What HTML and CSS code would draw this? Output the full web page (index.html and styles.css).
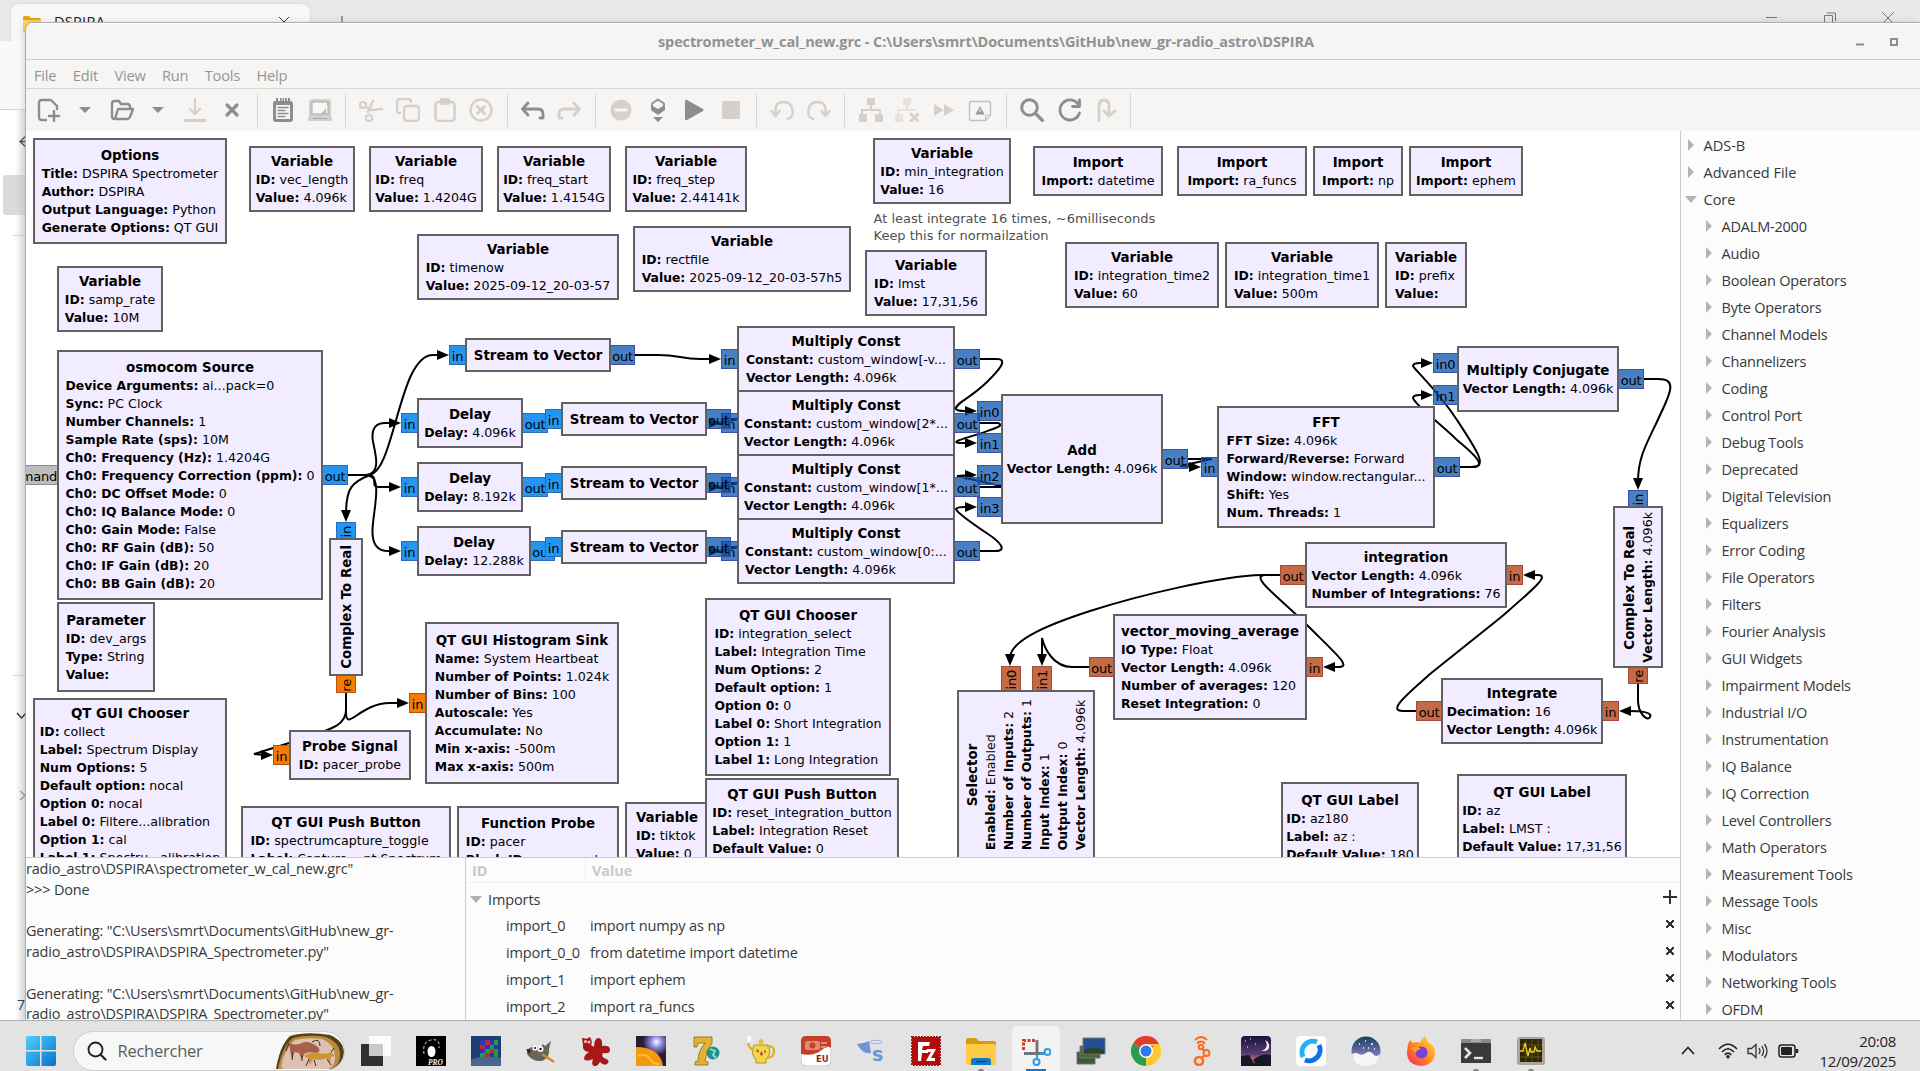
FILE: index.html
```html
<!DOCTYPE html>
<html lang="fr">
<head>
<meta charset="utf-8">
<title>spectrometer_w_cal_new.grc</title>
<link rel="stylesheet" href="styles.css">
</head>
<body>
<div class="desktop">
  <div class="explorer">
    <div class="ex-tabs">
      <div class="ex-tab">
        <svg class="ex-folder" width="18" height="16" viewBox="0 0 18 16"><path d="M0 1.5Q0 0 1.5 0H6l2 2h8.500Q18 2 18 3.500V16H0z" fill="#e8a512"/><path d="M0 4h18v12H0z" fill="#ffd45e"/></svg>
        <span class="ex-name">DSPIRA</span>
        <svg width="12" height="12" viewBox="0 0 12 12"><path d="M1 1l10 10M11 1L1 11" stroke="#333" fill="none"/></svg>
      </div>
      <svg class="ex-plus" width="14" height="14" viewBox="0 0 14 14"><path d="M7 0v14M0 7h14" stroke="#444" fill="none"/></svg>
      <div class="ex-buttons">
        <svg width="12" height="12" viewBox="0 0 12 12"><path d="M0 5.500h11" stroke="#777"/></svg>
        <svg width="12" height="12" viewBox="0 0 12 12"><path d="M.5 3.500h8v8h-8zM3 1h8.500v8" stroke="#777" fill="none"/></svg>
        <svg width="12" height="12" viewBox="0 0 12 12"><path d="M0 0l12 12M12 0L0 12" stroke="#777" fill="none"/></svg>
      </div>
    </div>
    <div class="ex-address"></div>
    <div class="ex-side">
      <svg width="26" height="911" viewBox="0 0 26 911">
        <path d="M27 25L20 31.500 27 38M20 31.500h8" stroke="#555" fill="none" stroke-width="1.300"/>
        <rect x="3" y="65" width="30" height="40" rx="3" fill="#dadada"/>
        <path d="M13 125.500h13M13 565.500h13" stroke="#d4d4d4"/>
        <path d="M17 603l4.500 5 4.500-5" stroke="#333" fill="none" stroke-width="1.300"/>
        <path d="M20 681l5 4.500-5 4.500" stroke="#999" fill="none" stroke-width="1.300"/>
      </svg>
      <span class="ex-count">7</span>
    </div>
  </div>

  <div class="grc">
    <header class="titlebar">
      <h1>spectrometer_w_cal_new.grc - C:\Users\smrt\Documents\GitHub\new_gr-radio_astro\DSPIRA</h1>
      <div class="win-buttons">
        <svg width="8" height="10" viewBox="0 0 8 10"><path d="M0 7.500h8" stroke="#8b8e8f" stroke-width="2"/></svg>
        <svg width="8" height="8" viewBox="0 0 8 8"><path d="M1 1h6v6H1z" stroke="#8b8e8f" stroke-width="2" fill="none"/></svg>
      </div>
    </header>
    <nav class="menubar"><span>File</span><span>Edit</span><span>View</span><span>Run</span><span>Tools</span><span>Help</span></nav>
    <div class="toolbar" id="toolbar"></div>
    <div class="work">
      <div class="left">
        <main class="canvas" id="canvas"></main>
        <div class="bottom">
          <div class="console">radio_astro\DSPIRA\spectrometer_w_cal_new.grc"
&gt;&gt;&gt; Done

Generating: "C:\Users\smrt\Documents\GitHub\new_gr-
radio_astro\DSPIRA\DSPIRA_Spectrometer.py"

Generating: "C:\Users\smrt\Documents\GitHub\new_gr-
radio_astro\DSPIRA\DSPIRA_Spectrometer.py"</div>
          <div class="vars">
            <div class="vars-head"><span>ID</span><span>Value</span></div>
            <div class="vars-group"><svg width="12" height="7" viewBox="0 0 12 7"><path d="M0 0h12L6 7z" fill="#b0b0b0"/></svg><span>Imports</span>
              <svg class="add" width="14" height="14" viewBox="0 0 14 14"><path d="M7 0v14M0 7h14" stroke="#2e3436" stroke-width="2"/></svg></div>
            <div class="var"><span>import_0</span><span>import numpy as np</span><i class="del"></i></div>
            <div class="var"><span>import_0_0</span><span>from datetime import datetime</span><i class="del"></i></div>
            <div class="var"><span>import_1</span><span>import ephem</span><i class="del"></i></div>
            <div class="var"><span>import_2</span><span>import ra_funcs</span><i class="del"></i></div>
          </div>
        </div>
      </div>
      <aside class="tree" id="tree"></aside>
    </div>
  </div>

  <footer class="taskbar">
    <svg class="start" width="30" height="30" viewBox="0 0 30 30"><defs><linearGradient id="gw" x1="0" y1="0" x2="1" y2="1"><stop offset="0" stop-color="#4fd0fb"/><stop offset="1" stop-color="#0672cf"/></linearGradient></defs><path d="M2 0h12v14H0V2q0-2 2-2zM15.500 0H28q2 0 2 2v12H15.500zM0 15.500h14V30H2q-2 0-2-2zM15.500 15.500H30V28q0 2-2 2H15.500z" fill="url(#gw)"/></svg>
    <div class="search">
      <svg width="20" height="20" viewBox="0 0 20 20"><circle cx="8.500" cy="8.500" r="7" fill="none" stroke="#222" stroke-width="1.900"/><path d="M13.500 13.500l5 5" stroke="#222" stroke-width="2.200" stroke-linecap="round"/></svg>
      <span>Rechercher</span>
      <svg class="cave" width="68" height="36" viewBox="0 0 68 36"><path d="M0 36Q4 12 14 3 30-2 54 2 68 8 68 20T58 36z" fill="#5a4019"/><path d="M2 36Q6 14 17 5 32 1 50 4 63 9 64 20T56 36z" fill="#b88c3e"/><path d="M5 34Q8 16 19 7 32 4 46 6 58 11 59 22T52 36H8z" fill="#dcc0b4"/><path d="M13 10Q20 13 26 10T42 14Q46 19 40 20 32 18 28 21L26 27 23 20 18 19 16 26 14 17z" fill="#a85f4a"/><path d="M28 23Q34 18 42 20T55 19L59 23 55 24 54 31 51 25Q44 28 37 26L34 32 32 25z" fill="#cc9434"/><path d="M13 10l-3 8M17 19l-1 8M26 22v6M33 26l-3 7M38 27l2 6M51 26l4 6M55 19l3-4M36 9q8-5 8 4" stroke="#3b2a22" stroke-width="1" fill="none"/></svg>
    </div>
    <div class="apps" id="apps"></div>
    <div class="tray">
      <svg width="14" height="9" viewBox="0 0 14 9"><path d="M1 8l6-6.500L13 8" fill="none" stroke="#222" stroke-width="1.700"/></svg>
      <svg class="wifi" width="20" height="16" viewBox="0 0 20 16"><path d="M1 6Q10-3.500 19 6M4 9Q10 2.500 16 9M6.700 12Q10 8.300 13.300 12" fill="none" stroke="#222" stroke-width="1.600"/><circle cx="10" cy="13.800" r="1.700" fill="#222"/></svg>
      <svg class="vol" width="21" height="18" viewBox="0 0 21 18"><path d="M1 6.500h3.500L9 2.500v13L4.500 11.500H1zM12 6q2 3 0 6M14.800 4q3.500 5 0 10M17.500 2q5 7 0 14" fill="none" stroke="#333" stroke-width="1.300"/></svg>
      <svg class="bat" width="21" height="14" viewBox="0 0 21 14"><rect x="1" y="1" width="16" height="12" rx="2.500" fill="none" stroke="#222" stroke-width="1.500"/><rect x="3" y="3" width="11" height="8" rx="1" fill="#222"/><path d="M19 5v4" stroke="#222" stroke-width="2.500"/></svg>
      <div class="clock"><span>20:08</span><span>12/09/2025</span></div>
    </div>
  </footer>
</div>
<script src="app.js"></script>
</body>
</html>
```

FILE: styles.css
```css
* { box-sizing: border-box; }
body { margin: 0; font-family: "Open Sans", "Noto Sans", sans-serif; overflow: hidden; }
svg { display: block; flex: none; }

.desktop { position: relative; width: 1920px; height: 1071px; overflow: hidden; background: #fff; display: flex; flex-direction: column; }

/* file explorer window partly hidden behind the editor */
.explorer { height: 1020px; flex: none; display: flex; flex-direction: column; }
.ex-tabs { height: 41px; background: #e8e8e8; display: flex; align-items: flex-start; }
.ex-tab { margin: 3px 0 0 10px; width: 301px; height: 38px; background: #f8f8f8; border-radius: 9px 9px 0 0; border: 1px solid #dedede; border-bottom: 0; display: flex; padding: 12px 20px 0 12px; }
.ex-tab > svg:last-child { margin: 0 0 0 auto; }
.ex-name { margin: -4px 0 0 13px; font-size: 14.500px; line-height: 20px; color: #222; letter-spacing: 0.3px; }
.ex-plus { margin: 16px 0 0 24px; }
.ex-buttons { margin: 12px 26px 0 auto; display: flex; gap: 46px; }
.ex-address { height: 69px; background: #f9f9f9; border-bottom: 1px solid #d6d6d6; }
.ex-side { position: relative; flex: 1; width: 26px; background: linear-gradient(90deg, #fff 55%, #e3e3e3); overflow: hidden; }
.ex-count { position: absolute; left: 17px; top: 886px; font-size: 14px; line-height: 18px; color: #28456a; }

/* editor window */
.grc { position: absolute; left: 26px; top: 23px; width: 1894px; height: 997px; background: #fff; border-radius: 7px 0 0 0; box-shadow: 0 0 0 1px #adadad, -2px 0 8px rgba(0,0,0,.14); display: flex; flex-direction: column; overflow: hidden; }
.titlebar { height: 37px; flex: none; background: #f6f5f4; border-bottom: 1px solid #cfcdcb; border-top: 1px solid #fff; display: flex; align-items: center; padding-left: 632px; }
.titlebar h1 { margin: 0; font-size: 14.500px; line-height: 20px; font-weight: 700; color: #8f9293; letter-spacing: -0.12px; white-space: nowrap; }
.win-buttons { margin-left: auto; display: flex; gap: 26px; align-items: center; padding-right: 22px; }
.menubar { height: 29px; flex: none; background: #f6f5f4; border-bottom: 1px solid #dbd9d7; display: flex; align-items: center; gap: 16.400px; padding: 1px 0 0 8px; font-size: 14.600px; letter-spacing: -0.18px; color: #929595; }
.toolbar { height: 42px; flex: none; background: #f6f5f4; display: flex; align-items: center; padding-left: 4.400px; }
.tool { width: 36.600px; flex: none; display: flex; justify-content: center; }
.toolbar .sep { width: 1px; height: 34px; margin: 0 7px; background: #d8d6d3; }
.work { flex: 1; min-height: 0; display: flex; }
.left { width: 1654px; display: flex; flex-direction: column; }
.canvas { position: relative; height: 726px; flex: none; overflow: hidden; background: #fff; font-family: "DejaVu Sans", sans-serif; color: #000; }

/* flow graph */
.wires { position: absolute; left: -26px; top: -131px; }
.block { position: absolute; background: #f1ecff; border: 2px solid #616161; display: flex; align-items: center; justify-content: center; white-space: nowrap; }
.block-text { display: flex; flex-direction: column; font-size: 12.640px; line-height: 18px; }
.block-text b { font-size: 12.400px; }
.block-title { font-size: 13.400px; line-height: 19px; font-weight: 700; text-align: center; }
.block.vert .block-text { writing-mode: vertical-rl; transform: rotate(180deg); }
.port { position: absolute; border: 1px solid; font-size: 13px; display: flex; align-items: center; justify-content: center; line-height: 16px; letter-spacing: -0.2px; padding-top: 3px; }
.port.c { background: #2196f3; border-color: #2a6cba; }
.port.v { background: rgba(0,79,173,.72); border-color: #3c50a8; }
.port.f { background: #f57c00; border-color: #b8501c; }
.port.o { background: #c46a44; border-color: #a54a3c; }
.port.m { background: #bdbdbd; border-color: #8c8c8c; justify-content: flex-end; }
.port.vert span { writing-mode: vertical-rl; transform: rotate(180deg); }
.port.vert { padding: 2px 0 0 2px; }
.note { position: absolute; font-size: 13px; line-height: 17px; color: #505050; white-space: pre; }

/* console and variable editor */
.bottom { flex: 1; display: flex; border-top: 1px solid #cfcdcb; background: #fcfcfc; color: #36393b; overflow: hidden; }
.console { width: 439px; flex: none; padding-top: 1px; font-size: 14.500px; line-height: 20.750px; white-space: pre; letter-spacing: -0.18px; }
.vars { flex: 1; border-left: 1px solid #cfcdcb; font-size: 14.500px; letter-spacing: -0.12px; }
.vars-head { height: 25px; border-bottom: 1px solid #f0f0f0; display: flex; font-weight: 700; line-height: 26px; color: #c9c9c9; }
.vars-head span:first-child { width: 120px; padding-left: 6px; border-right: 1px solid #f0f0f0; }
.vars-head span + span { padding-left: 6px; }
.vars-group { height: 29px; display: flex; align-items: center; padding: 3px 2px 0 4px; }
.vars-group span { margin-left: 6px; }
.vars-group .add { margin-left: auto; margin-right: 1px; margin-top: -4px; }
.var { height: 27px; display: flex; align-items: center; padding: 0 6px 0 40px; }
.var span:first-child { width: 84px; }
.del { margin-left: auto; width: 8px; height: 8px; background: linear-gradient(45deg, transparent 39%, #2e3436 39% 61%, transparent 61%), linear-gradient(-45deg, transparent 39%, #2e3436 39% 61%, transparent 61%); margin-top: -3px; }

/* block library */
.tree { flex: 1; border-left: 1px solid #cfcdcb; background: #fcfcfc; font-size: 14.500px; letter-spacing: -0.2px; color: #36393b; padding-top: 1px; overflow: hidden; }
.leaf { height: 27px; display: flex; align-items: center; padding-left: 24.500px; gap: 10px; }
.leaf.top { padding-left: 6.500px; letter-spacing: 0; }
.leaf svg { width: 12px; margin-left: -3px; margin-right: -3px; margin-top: -2px; }

/* taskbar */
.taskbar { height: 51px; flex: none; border-top: 1px solid #b0b0b0; background: #e3e3e3; display: flex; align-items: center; padding-left: 25.500px; position: relative; }
.start { margin-top: 10px; }
.search { width: 272px; height: 40px; flex: none; margin: 9px 0 0 17px; border-radius: 20px; background: #f7f7f7; border: 1px solid #cfcfcf; display: flex; align-items: center; padding-left: 13px; overflow: hidden; }
.search span { margin-left: 11px; font-size: 16.500px; letter-spacing: -0.25px; color: #5c5c5c; }
.cave { margin-left: auto; }
.apps { display: flex; flex: none; height: 100%; margin-left: 4px; }
.app { width: 55px; flex: none; display: flex; justify-content: center; align-items: center; padding-top: 10px; position: relative; }
.app.active::before { content: ""; position: absolute; left: 3px; top: 5px; width: 48px; height: 46px; border-radius: 5px 5px 0 0; background: #f3f3f3; }
.app svg { position: relative; }
.app.running::after { content: ""; position: absolute; bottom: 0; width: 6px; height: 2px; border-radius: 2px 2px 0 0; background: #888; }
.app.active::after { content: ""; position: absolute; bottom: 0; width: 20px; height: 2px; background: #0a78d4; }
.tray { display: flex; align-items: center; margin-left: auto; padding-right: 24px; height: 100%; padding-top: 9px; }
.wifi { margin-left: 23px; }
.vol { margin-left: 9px; }
.bat { margin-left: 10px; }
.clock { width: 97px; display: flex; flex-direction: column; align-items: flex-end; font-size: 15px; line-height: 20px; letter-spacing: -0.3px; color: #222; }
```

FILE: app.js
```js
// Flow graph blocks: [x, y, width, height, title, [[key, value], ...], vertical]
const blocks = [
  [33,138,194,106,'Options',[['Title:','DSPIRA Spectrometer'],['Author:','DSPIRA'],['Output Language:','Python'],['Generate Options:','QT GUI']]],
  [249,146,106,66,'Variable',[['ID:','vec_length'],['Value:','4.096k']]],
  [369,146,114,66,'Variable',[['ID:','freq'],['Value:','1.4204G']]],
  [497,146,114,66,'Variable',[['ID:','freq_start'],['Value:','1.4154G']]],
  [625,146,122,66,'Variable',[['ID:','freq_step'],['Value:','2.44141k']]],
  [417,234,202,66,'Variable',[['ID:','timenow'],['Value:','2025-09-12_20-03-57']]],
  [57,266,106,66,'Variable',[['ID:','samp_rate'],['Value:','10M']]],
  [633,226,218,66,'Variable',[['ID:','rectfile'],['Value:','2025-09-12_20-03-57h5']]],
  [873,138,138,66,'Variable',[['ID:','min_integration'],['Value:','16']]],
  [1033,146,130,50,'Import',[['Import:','datetime']]],
  [1177,146,130,50,'Import',[['Import:','ra_funcs']]],
  [1313,146,90,50,'Import',[['Import:','np']]],
  [1409,146,114,50,'Import',[['Import:','ephem']]],
  [865,250,122,66,'Variable',[['ID:','lmst'],['Value:','17,31,56']]],
  [1065,242,154,66,'Variable',[['ID:','integration_time2'],['Value:','60']]],
  [1225,242,154,66,'Variable',[['ID:','integration_time1'],['Value:','500m']]],
  [1385,242,82,66,'Variable',[['ID:','prefix'],['Value:','']]],
  [57,350,266,250,'osmocom Source',[['Device Arguments:','ai...pack=0'],['Sync:','PC Clock'],['Number Channels:','1'],['Sample Rate (sps):','10M'],['Ch0: Frequency (Hz):','1.4204G'],['Ch0: Frequency Correction (ppm):','0'],['Ch0: DC Offset Mode:','0'],['Ch0: IQ Balance Mode:','0'],['Ch0: Gain Mode:','False'],['Ch0: RF Gain (dB):','50'],['Ch0: IF Gain (dB):','20'],['Ch0: BB Gain (dB):','20']]],
  [57,602,98,90,'Parameter',[['ID:','dev_args'],['Type:','String'],['Value:','']]],
  [465,338,146,34,'Stream to Vector',[]],
  [417,398,106,50,'Delay',[['Delay:','4.096k']]],
  [417,462,106,50,'Delay',[['Delay:','8.192k']]],
  [417,526,114,50,'Delay',[['Delay:','12.288k']]],
  [561,402,146,34,'Stream to Vector',[]],
  [561,466,146,34,'Stream to Vector',[]],
  [561,530,146,34,'Stream to Vector',[]],
  [737,326,218,66,'Multiply Const',[['Constant:','custom_window[-v...'],['Vector Length:','4.096k']]],
  [737,390,218,66,'Multiply Const',[['Constant:','custom_window[2*...'],['Vector Length:','4.096k']]],
  [737,454,218,66,'Multiply Const',[['Constant:','custom_window[1*...'],['Vector Length:','4.096k']]],
  [737,518,218,66,'Multiply Const',[['Constant:','custom_window[0:...'],['Vector Length:','4.096k']]],
  [1001,394,162,130,'Add',[['Vector Length:','4.096k']]],
  [1217,406,218,122,'FFT',[['FFT Size:','4.096k'],['Forward/Reverse:','Forward'],['Window:','window.rectangular...'],['Shift:','Yes'],['Num. Threads:','1']]],
  [1457,346,162,66,'Multiply Conjugate',[['Vector Length:','4.096k']]],
  [1305,542,202,66,'integration',[['Vector Length:','4.096k'],['Number of Integrations:','76']]],
  [1113,614,194,106,'vector_moving_average',[['IO Type:','Float'],['Vector Length:','4.096k'],['Number of averages:','120'],['Reset Integration:','0']]],
  [1441,678,162,66,'Integrate',[['Decimation:','16'],['Vector Length:','4.096k']]],
  [1613,506,50,162,'Complex To Real',[['Vector Length:','4.096k']],1],
  [329,538,34,138,'Complex To Real',[],1],
  [957,690,138,170,'Selector',[['Enabled:','Enabled'],['Number of Inputs:','2'],['Number of Outputs:','1'],['Input Index:','1'],['Output Index:','0'],['Vector Length:','4.096k']],1],
  [705,598,186,178,'QT GUI Chooser',[['ID:','integration_select'],['Label:','Integration Time'],['Num Options:','2'],['Default option:','1'],['Option 0:','0'],['Label 0:','Short Integration'],['Option 1:','1'],['Label 1:','Long Integration']]],
  [625,802,84,66,'Variable',[['ID:','tiktok'],['Value:','0']]],
  [705,778,194,86,'QT GUI Push Button',[['ID:','reset_integration_button'],['Label:','Integration Reset'],['Default Value:','0']]],
  [241,806,210,68,'QT GUI Push Button',[['ID:','spectrumcapture_toggle'],['Label:','Capture ...nt Spectrum']]],
  [457,806,162,70,'Function Probe',[['ID:','pacer'],['Block ID:','pacer_probe']]],
  [425,622,194,162,'QT GUI Histogram Sink',[['Name:','System Heartbeat'],['Number of Points:','1.024k'],['Number of Bins:','100'],['Autoscale:','Yes'],['Accumulate:','No'],['Min x-axis:','-500m'],['Max x-axis:','500m']]],
  [289,730,122,50,'Probe Signal',[['ID:','pacer_probe']]],
  [33,698,194,174,'QT GUI Chooser',[['ID:','collect'],['Label:','Spectrum Display'],['Num Options:','5'],['Default option:','nocal'],['Option 0:','nocal'],['Label 0:','Filtere...alibration'],['Option 1:','cal'],['Label 1:','Spectru...alibration']]],
  [1281,782,138,90,'QT GUI Label',[['ID:','az180'],['Label:','az :'],['Default Value:','180']]],
  [1457,774,170,90,'QT GUI Label',[['ID:','az'],['Label:','LMST :'],['Default Value:','17,31,56']]]
];

// Ports: [x, y, width, height, label, kind, vertical]
const ports = [
  [0,465,58,20,'command','m'],
  [322,465,26,20,'out','c'],
  [449,345,17,20,'in','c'], [610,345,25,20,'out','v'],
  [401,413,17,20,'in','c'], [522,413,26,20,'out','c'], [545,409,17,20,'in','c'],
  [401,477,17,20,'in','c'], [522,477,26,20,'out','c'], [545,473,17,20,'in','c'],
  [401,541,17,20,'in','c'], [530,541,25,20,'out','c'], [545,537,17,20,'in','c'],
  [721,349,17,20,'in','v'], [721,413,17,20,'in','v'], [721,477,17,20,'in','v'], [721,541,17,20,'in','v'],
  [706,409,25,20,'out','v'], [706,473,25,20,'out','v'], [706,537,25,20,'out','v'],
  [954,349,26,20,'out','v'], [954,413,26,20,'out','v'], [954,477,26,20,'out','v'], [954,541,26,20,'out','v'],
  [977,401,25,20,'in0','v'], [977,433,25,20,'in1','v'], [977,465,25,20,'in2','v'], [977,497,25,20,'in3','v'],
  [1162,449,26,20,'out','v'], [1201,457,17,20,'in','v'], [1434,457,26,20,'out','v'],
  [1433,353,25,20,'in0','v'], [1433,385,25,20,'in1','v'], [1618,369,26,20,'out','v'],
  [1280,565,26,20,'out','o'], [1506,565,17,20,'in','o'],
  [1089,657,25,20,'out','o'], [1306,657,17,20,'in','o'],
  [1416,701,26,20,'out','o'], [1602,701,17,20,'in','o'],
  [1628,490,20,17,'in','v',1], [1628,667,20,17,'re','o',1],
  [336,522,20,17,'in','c',1], [336,675,20,18,'re','f',1],
  [1001,666,20,25,'in0','o',1], [1032,666,20,25,'in1','o',1],
  [409,693,17,20,'in','f'], [273,745,17,20,'in','f']
];

// Connections: path, then arrow tip and its direction
const wires = [
  ['M348 475H368C395 475 398 355 433 355H440',449,355,'r'],
  ['M348 475H366C384 474 373 447 372.500 438C372 427 377 423 385 423H392',401,423,'r'],
  ['M348 475H366C382 475 368 487 379 487H392',401,487,'r'],
  ['M348 475H366C384 475 373 510 372.500 530C372 545 378 551 388 551H392',401,551,'r'],
  ['M348 475H370C352 482 346 488 346 514',346,522,'d'],
  ['M635 355H658C680 355 680 359 700 359H712',721,359,'r'],
  ['M731 419H740L712 424',721,423,'r'], ['M731 483H740L712 488',721,487,'r'], ['M731 547H740L712 552',721,551,'r'],
  ['M979 359H997C1009 359 998 371 988 381C970 399 955 403 956 409Q957 411 965 411H970',977,411,'r'],
  ['M979 423H998C1005 426 995 428 979 434C962 439 948 443 962 443H970',977,443,'r'],
  ['M979 487H1001V486L957 476 970 475',977,475,'r'],
  ['M979 551H995C1008 551 1000 542 988 534C970 522 957 513 956 509Q957 507 965 507H970',977,507,'r'],
  ['M1187 459H1212L1180 466 1195 467',1201,467,'r'],
  ['M1460 467H1472C1488 467 1478 452 1457 420C1438 391 1415 370 1413 366Q1413 363 1420 363H1424',1433,363,'r'],
  ['M1460 467H1472C1488 467 1474 454 1457 440C1436 420 1415 405 1413 398Q1413 395 1420 395H1424',1433,395,'r'],
  ['M1643 379H1658C1676 379 1672 390 1661 413C1648 442 1638 455 1638 482',1638,490,'d'],
  ['M1280 575H1262C1220 576 1140 595 1090 611C1050 624 1010 640 1010 658',1010,666,'d'],
  ['M1280 575H1264C1250 577 1280 598 1307 625C1338 656 1352 667 1338 667H1332',1323,667,'l'],
  ['M1089 667H1072C1054 667 1045 650 1042 638V658',1042,666,'d'],
  ['M1416 711H1403C1386 711 1410 692 1430 674L1500 618C1530 592 1551 575 1538 575H1532',1523,575,'l'],
  ['M1638 684V700C1638 713 1647 722 1650 717C1653 712 1640 711 1628 711',1619,711,'l'],
  ['M346 693V712C346 733 360 703 390 703H400',409,703,'r'],
  ['M346 693V710C346 728 326 730 289 743L254 754 264 755',273,755,'r']
];

const canvas = document.getElementById('canvas');
const OX = 26, OY = 131;
const heads = { r: 'M0 0l-12-5v10z', l: 'M0 0l12-5v10z', d: 'M0 0l-5-12h10z' };
let svg = '<svg class="wires" width="1700" height="900" viewBox="0 0 1700 900" fill="none" stroke="#000" stroke-width="2">';
for (const [d, x, y, dir] of wires) {
  svg += `<path d="${d}"/><path d="${heads[dir]}" transform="translate(${x} ${y})" fill="#000" stroke="none"/>`;
}
canvas.insertAdjacentHTML('beforeend', svg + '</svg>');

const box = (x, y, w, h) => `left:${x - OX}px;top:${y - OY}px;width:${w}px;height:${h}px`;
for (const [x, y, w, h, t, kind, v] of ports) {
  canvas.insertAdjacentHTML('beforeend', `<div class="port ${kind}${v ? ' vert' : ''}" style="${box(x, y, w, h)}"><span>${t}</span></div>`);
}
for (const [x, y, w, h, title, rows, v] of blocks) {
  const lines = rows.map(([k, s]) => `<div><b>${k}</b> ${s}</div>`).join('');
  canvas.insertAdjacentHTML('beforeend', `<div class="block${v ? ' vert' : ''}" style="${box(x, y, w, h)}"><div class="block-text"><div class="block-title">${title}</div>${lines}</div></div>`);
}
canvas.insertAdjacentHTML('beforeend', `<div class="note" style="left:${873.5 - OX}px;top:${210 - OY}px">At least integrate 16 times, ~6milliseconds\nKeep this for normailzation</div>`);

// Block library
const tree = ['ADS-B','Advanced File','Core','ADALM-2000','Audio','Boolean Operators','Byte Operators','Channel Models','Channelizers','Coding','Control Port','Debug Tools','Deprecated','Digital Television','Equalizers','Error Coding','File Operators','Filters','Fourier Analysis','GUI Widgets','Impairment Models','Industrial I/O','Instrumentation','IQ Balance','IQ Correction','Level Controllers','Math Operators','Measurement Tools','Message Tools','Misc','Modulators','Networking Tools','OFDM'];
document.getElementById('tree').innerHTML = tree.map((name, i) => {
  const arrow = name === 'Core' ? 'M0 3h12L6 10z' : 'M3 0v12l6-6z';
  return `<div class="leaf${i < 3 ? ' top' : ''}"><svg width="12" height="12" viewBox="0 0 12 12"><path d="${arrow}" fill="#b4b4b4"/></svg><span>${name}</span></div>`;
}).join('');

// Toolbar icons; D = enabled colour, L = disabled colour
const D = '#8b8e8f', L = '#d5d0cb';
const st = (c, d, w = 2.4) => `<path d="${d}" fill="none" stroke="${c}" stroke-width="${w}" stroke-linecap="round" stroke-linejoin="round"/>`;
const fl = (c, d) => `<path d="${d}" fill="${c}"/>`;
const tools = [
  st(D,'M9 22H5q-3 0-3-3V5q0-3 3-3h9l6 6v3M17 13v10M12 18h10'),
  fl(D,'M6 9h12l-6 6z'),
  st(D,'M5 21q-3 0-3-3V6q0-3 3-3h4l2 3h6q3 0 3 3v2M5 21l3-10h15l-3 8q-1 2-3 2z'),
  fl(D,'M6 9h12l-6 6z'),
  st(L,'M12 1v15M7 11l5 5 5-5') + fl(L,'M1 21h22v3H1z'),
  st(D,'M7 7l10 10M17 7L7 17',3.2), '|',
  fl(D,'M4 3h1V0h2v3h2V0h1.500v3h1V0h1.500v3h1V0H16v3h1V0h2v3q3 0 3 3v15q0 3-3 3H5q-3 0-3-3V5q0-2 2-2z') + '<path d="M5 7h14v14H5z" fill="#f6f5f4"/>' + st(D,'M7 9.500h10M7 12.500h7M7 15.500h10M7 18.500h7',1.3),
  '<path d="M1 4q0-3 3-3h16q3 0 3 3v14l1 2v3H0v-3l1-2z" fill="#d3d1ce"/><rect x="4" y="4" width="16" height="12" fill="#f8f8f7" stroke="#aaa"/><path d="M13 16l5-6v6z" fill="#bbb"/><circle cx="20" cy="6" r="1" fill="#e09a3a"/>' + st('#aaa','M5 20.500h14',1), '|',
  st(L,'M9 14L14 3M7 9l5 3 11-1') + `<circle cx="4" cy="7" r="3" fill="none" stroke="${L}" stroke-width="2.200"/><circle cx="10" cy="20" r="3.200" fill="none" stroke="${L}" stroke-width="2.200"/>`,
  st(L,'M4 15q-3 0-3-3V4q0-3 3-3h8q3 0 3 3') + `<rect x="8" y="8" width="15" height="15" rx="3" fill="none" stroke="${L}" stroke-width="2.400"/>`,
  `<rect x="2.500" y="4" width="19" height="19" rx="3" fill="none" stroke="${L}" stroke-width="2.600"/><rect x="7" y="0" width="10" height="7" rx="2" fill="${L}"/>`,
  `<circle cx="12" cy="12" r="10.500" fill="none" stroke="${L}" stroke-width="2.400"/>` + st(L,'M8.500 8.500l7 7M15.500 8.500l-7 7',2.8), '|',
  st(D,'M7 5L1.500 11 7 17M2 11h15q5 0 5 5v4h-3',2.8),
  st(L,'M17 5l5.500 6L17 17M22 11H7q-5 0-5 5v4h3',2.8), '|',
  `<circle cx="12" cy="12" r="10.500" fill="${L}"/>` + '<path d="M5.500 10.500h13v3h-13z" fill="#f6f5f4"/>',
  st(D,'M12 1.500l6 4v5l-6 4-6-4v-5z',1.8) + fl(D,'M5 7l7 4 7-4v5l-7 5-7-5zM7 19h10l-5 5z'),
  fl(D,'M3 3q0-2 2-1l16 9q1 1 0 2L5 22q-2 1-2-1z'),
  `<rect x="3" y="3" width="18" height="18" rx="1.500" fill="${L}"/>`, '|',
  st(L,'M1.500 13l4 5 4-5M5.500 17V12q0-8 8-8t9 8-5 9'),
  st(L,'M22.500 13l-4 5-4-5M18.500 17V12q0-8-8-8t-9 8 5 9'), '|',
  fl(L,'M8 0h8v7h-3v4h9v5h2v8h-8v-8h4v-3H4v3h4v8H0v-8h2v-5h9V7H8z'),
  '<g opacity=".5">' + fl(L,'M8 0h8v7h-3v4h9v2H4v3h4v8H0v-8h2v-5h9V7H8z') + '</g>' + st(L,'M16 16l7 7M23 16l-7 7',3),
  fl(L,'M2 6l10 6-10 6zM12 6l10 6-10 6z'),
  '<path d="M3 3.500h17.500q2 0 2 2V17l-5 5.500H3q-1.500 0-1.500-2V5q0-1.500 1.500-1.500z" fill="none" stroke="#c4c1bd" stroke-width="1.300"/><path d="M17.500 22.500v-5.500h5" fill="none" stroke="#c4c1bd"/><path d="M12 8l4.500 8.500h-9z" fill="#999"/><path d="M12 11v3" stroke="#fff"/>', '|',
  '<circle cx="9.500" cy="9.500" r="7.800" fill="none" stroke="' + D + '" stroke-width="3"/>' + st(D,'M15.500 15.500l7 7',3.2),
  st(D,'M21 6a10 10 0 1 0 1.500 9M22.500 2v6.500h-7',2.8),
  st(L,'M6 23V8q0-6 5-6t5 6v10M11 13l5 5 6-5',2.8), '|'
];
document.getElementById('toolbar').innerHTML = tools.map(t => t === '|' ? '<i class="sep"></i>' : `<div class="tool"><svg width="24" height="24" viewBox="0 0 24 24">${t}</svg></div>`).join('');

// Taskbar applications, drawn on a 30 x 30 grid
const apps = [
  ['', '<path d="M0 8h22v22H0z" fill="#303030"/><path d="M8 0h22v20H8z" fill="#fff" opacity=".88"/><path d="M8 8h14v12H8z" fill="#c9c9c9"/>'],
  ['', '<path d="M0 0h30v30H0z" fill="#000"/><path d="M8 18q-2-12 7-14t8 8" fill="none" stroke="#aaa" stroke-width="1.200" stroke-dasharray="3 2"/><ellipse cx="15.500" cy="15.500" rx="4" ry="5.500" fill="#fff"/><text x="12" y="28.500" font-family="Liberation Serif" font-weight="700" font-style="italic" font-size="7.500" fill="#eee">PRO</text>'],
  ['', '<path d="M0 0h30v30H0z" fill="#1d3f78"/><path d="M0 24q12-6 30-2v8H0z" fill="#4a6590"/><path d="M9 4h18v17H9z" fill="#259a48"/><path d="M9 4h5v5H9zM19 4h4v5h-4zM14 9h5v4h-5zM23 9h4v4h-4zM9 13h5v4H9zM19 17h4v4h-4z" fill="#2c36b0"/><path d="M14 4h5v5h-5zM9 9h5v4H9zM19 13h4v4h-4zM14 17h5v4h-5z" fill="#b92d3c"/>'],
  ['', '<path d="M1 14q5-5 11-3l2 1 3-4 2 2 6-5-2 8q1 9-7 12-10 1-15-7z" fill="#67645c"/><path d="M0 13l5 1-2 4z" fill="#222"/><circle cx="9" cy="12" r="2.600" fill="#fff"/><circle cx="14.500" cy="13" r="3" fill="#fff"/><circle cx="9" cy="12" r="1"/><circle cx="14.500" cy="13" r="1.200"/><path d="M16 18l12 8" stroke="#d98529" stroke-width="2.500"/>'],
  ['', '<path d="M1 2q3 0 4 1l4-2q3 5 1 8l3 2q0-8 4-9 5 0 4 8 8-1 8 4 0 4-7 3-2 3 1 5 6 2 4 5-3 4-8-1-3 5-6 4t-1-7q-7 3-9 0 0-4 5-7-7-1-6-7z" fill="#a81818"/><circle cx="4.500" cy="5.500" r="1.500" fill="#f2c9c9"/><circle cx="8" cy="6" r="1.500" fill="#f2c9c9"/>'],
  ['', '<defs><radialGradient id="gs" cx=".68" cy=".2" r=".45"><stop offset="0" stop-color="#fff"/><stop offset=".4" stop-color="#8f8ce0"/><stop offset="1" stop-color="#2b1a38"/></radialGradient></defs><path d="M0 0h30v30H0z" fill="url(#gs)"/><path d="M0 11q24 0 27 19H0z" fill="#f29a0c"/><path d="M2 20q8-3 12 3t9 5" stroke="#ffc02e" stroke-width="2" fill="none"/>'],
  ['', '<path d="M3 1h18v6Q15 15 14 25l3 1v3H4v-3l3-1q0-10 7-18H7l-1 4H3z" fill="#e3b32f" stroke="#8f6510" stroke-width=".8"/><circle cx="22" cy="17" r="6.500" fill="#1f8f96"/><path d="M19 13l5 2-2 4 3 3" stroke="#9ae0b2" stroke-width="1.800" fill="none"/>'],
  ['', '<path d="M8 9h14q4 8-2 15v3H10v-3Q4 17 8 9z" fill="#f0d84a" stroke="#b38f18"/><path d="M21 11q7-2 7 4t-6 7M8 15Q3 12 2 7" fill="none" stroke="#d8b42a" stroke-width="2.500"/><path d="M2 7Q0 0 3 0t2 5" fill="#fff"/><circle cx="15" cy="5.500" r="2.500" fill="#e6c238"/><path d="M10 15l2-2 1 4zM14 18l1.500-3 1.500 3-1.500 2zM18 14l2 1-1 3z" fill="#c9302c"/>'],
  ['', '<rect width="30" height="30" rx="5" fill="#fff" stroke="#bbb"/><path d="M0 5q0-5 5-5h20q5 0 5 5v7q-4-3-8 1-9 8-22 5z" fill="#c4402a"/><rect x="4" y="5" width="15" height="9" rx="2" fill="#e28a76"/><circle cx="11.500" cy="9.500" r="3" fill="#c4402a"/><path d="M20 7h6M20 11h6" stroke="#e28a76" stroke-width="1.800"/><text x="15" y="26" font-family="DejaVu Sans" font-weight="700" font-size="8.500" fill="#8c2b1e">EU</text>'],
  ['', '<path d="M1 8q8-1 12-3l2 12q-8 2-14-9z" fill="#6e93d6"/><ellipse cx="20" cy="6" rx="6" ry="1.700" fill="none" stroke="#9ab4e0"/><text x="16" y="25" font-family="DejaVu Sans" font-weight="700" font-size="19" fill="#6e93d6">s</text>'],
  ['', '<path d="M1 1h28v28H1z" fill="#b00d0d" stroke="#b00d0d" stroke-width="2" stroke-dasharray="2 1"/><path d="M7 25V6h12l-1 4h-6l-1 4h6v3h-6l-1 8zM16 13h9l-5 9h4v3h-9l5-9h-4z" fill="#fff"/>'],
  ['running', '<path d="M0 4q0-2 2-2h8l3 3h15q2 0 2 2v8H0z" fill="#d89b0e"/><path d="M0 8h28q2 0 2 2v17q0 2-2 2H2q-2 0-2-2z" fill="#ffcc45"/><path d="M5 29v-4q0-3 3-3h14q3 0 3 3v4z" fill="#1478c8"/><path d="M10 25.500h10" stroke="#0d4c86" stroke-width="1.500"/>'],
  ['active', '<path d="M2.500 14V4.500H14" fill="none" stroke="#d83b1e" stroke-width="3" stroke-dasharray="3 1.500"/><path d="M16 4v15M3 17.500h20" stroke="#6d7680" stroke-width="3"/><circle cx="26.500" cy="16" r="3" fill="none" stroke="#2b9de0" stroke-width="2"/><circle cx="15.500" cy="26" r="3" fill="none" stroke="#2b9de0" stroke-width="2"/><path d="M16 19v4M19 17.500h4" stroke="#2b9de0" stroke-width="2"/>'],
  ['', '<g stroke="#777"><path d="M1 16h18v12H1z" fill="#3e5734"/><path d="M4 10h20v12H4z" fill="#46663a"/><path d="M7 2h22v16H7z" fill="#234f96"/></g><path d="M8 14q10-4 20 0v3.500H8z" fill="#2b4524"/>'],
  ['', '<path d="M15 15L2 7.500A15 15 0 0 1 28 7.500z" fill="#e33b2e"/><path d="M15 15l13-7.500A15 15 0 0 1 15 30z" fill="#fcc934"/><path d="M15 15v15A15 15 0 0 1 2 7.500z" fill="#2a9c4a"/><path d="M15 8h13.500L29 10H15z" fill="#fcc934"/><circle cx="15" cy="15" r="7" fill="#fff"/><circle cx="15" cy="15" r="5.500" fill="#3277e8"/>'],
  ['', '<g fill="none" stroke="#ff6a1c" stroke-width="2"><path d="M9 4q6-6 12 0M11 7.500q4-4 8 0"/><circle cx="15" cy="11" r="2.300"/><circle cx="20.500" cy="17" r="3"/><circle cx="13" cy="25" r="4" stroke-width="2.600"/><path d="M16 13l3 2M18.500 19.500l-3 2.500"/></g>'],
  ['', '<defs><linearGradient id="gm" x1="0" y1="0" x2="0" y2="1"><stop offset="0" stop-color="#141338"/><stop offset=".6" stop-color="#5b3e78"/><stop offset=".85" stop-color="#de8350"/></linearGradient></defs><rect width="30" height="30" rx="4" fill="url(#gm)"/><path d="M0 20l8-1 5 8 8 3H0zM12 24q9-7 18-5v11H16z" fill="#17172a"/><path d="M24 4q5 8-4 11 10 1 8-7-1-3-4-4z" fill="#eee"/><path d="M4 5h1M9 3h1M14 8h1M6 11h1" stroke="#fff"/>'],
  ['', '<rect width="30" height="30" rx="4" fill="#fff"/><path d="M21 6A11 11 0 0 0 7 21" fill="none" stroke="#21b1f5" stroke-width="5"/><path d="M9 24A11 11 0 0 0 23 9" fill="none" stroke="#0a74e8" stroke-width="5"/>'],
  ['', '<defs><linearGradient id="gp" x1="0" y1="0" x2="0" y2="1"><stop offset="0" stop-color="#0f4459"/><stop offset=".6" stop-color="#7c72b5"/></linearGradient></defs><circle cx="15" cy="15" r="14.500" fill="url(#gp)"/><path d="M1 18q4-2 7 0t7-1 7 1 7 0Q27 30 15 30T1 18z" fill="#f6f6fa"/><path d="M8 8h1M14 5h1M20 8h2M12 12h1M23 13h1M17 12h1" stroke="#fff" stroke-width="1.300"/>'],
  ['', '<defs><linearGradient id="gf" x1="1" y1="0" x2="0" y2="1"><stop offset="0" stop-color="#ffe24a"/><stop offset=".5" stop-color="#ff8a1e"/><stop offset="1" stop-color="#f0246a"/></linearGradient></defs><path d="M2 8l2-4 3 3q4-2 7 0 1-4 5-7 1 5 6 8 4 3 4 9-1 12-14 13Q1 29 1 16z" fill="url(#gf)"/><circle cx="15.500" cy="16.500" r="6" fill="#7a3fd6"/><path d="M5 12q6-3 10 1-5 1-5 4z" fill="#ff9b2a"/>'],
  ['running', '<path d="M0 4q0-1 1-1h28q1 0 1 1v5H0z" fill="#8a8a8a"/><path d="M10 3h10v3H10z" fill="#aaa"/><path d="M0 7h30v20H0z" fill="#3a3a3a"/><path d="M4 12l5 5-5 5" fill="none" stroke="#e6e6e6" stroke-width="2.600"/><path d="M13 22h9" stroke="#e6e6e6" stroke-width="2.400"/>'],
  ['running', '<rect x="1" y="1" width="28" height="28" rx="3" fill="#a9a59b"/><path d="M4 3h22v23H4z" fill="#2e2808"/><path d="M4 9h22M4 15h22M4 21h22M10 3v23M16 3v23M22 3v23" stroke="#5c5012"/><path d="M4 15h3l2-8 3 13 2-8 1 4h3l1-5 2 4h4" fill="none" stroke="#f0cc28" stroke-width="1.300"/>']
];
document.getElementById('apps').innerHTML = apps.map(([cls, art]) => `<div class="app ${cls}"><svg width="30" height="30" viewBox="0 0 30 30">${art}</svg></div>`).join('');
```
